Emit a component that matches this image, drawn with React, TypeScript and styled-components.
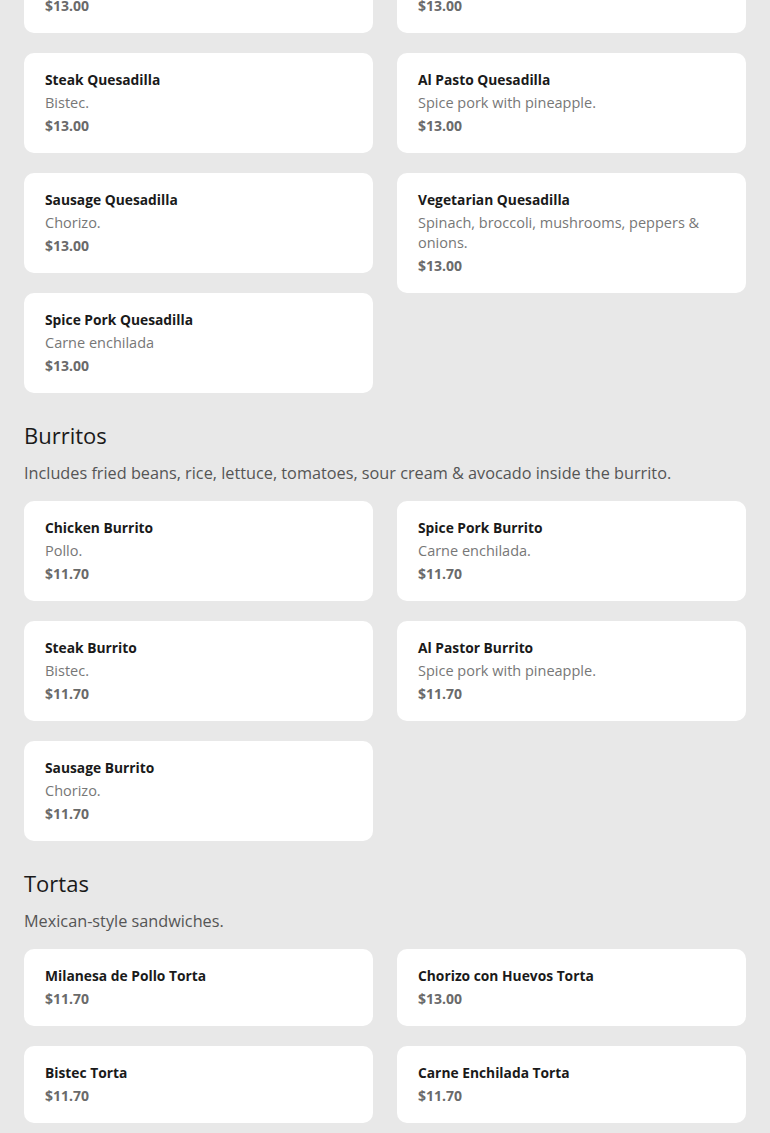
import type React from "react";
import styled, { createGlobalStyle } from "styled-components";

const GlobalStyle = createGlobalStyle`
  body {
    margin: 0;
    background: #e8e8e8;
    font-family: "Open Sans", "Noto Sans", sans-serif;
  }
`;

const Page = styled.div`
  padding: 0 24px 24px;
  margin-top: -67px;
`;

const Section = styled.section`
  margin-bottom: 27px;
`;

const SectionTitle = styled.h2`
  margin: 0;
  font-size: 22px;
  line-height: 30px;
  font-weight: 400;
  color: #1a1a1a;
`;

const SectionDesc = styled.p`
  margin: 11px 0 16px;
  font-size: 16.25px;
  line-height: 24px;
  color: #555;
`;

const Columns = styled.div`
  display: grid;
  grid-template-columns: 1fr 1fr;
  column-gap: 24px;
  align-items: start;
`;

const Column = styled.div`
  display: flex;
  flex-direction: column;
  gap: 20px;
`;

const Card = styled.div`
  background: #fff;
  border-radius: 10px;
  padding: 17px 21px 17px;
`;

const ItemName = styled.div`
  font-size: 13.8px;
  line-height: 20px;
  font-weight: 700;
  color: #1a1a1a;
`;

const ItemDesc = styled.div`
  margin: 3px 0 1px;
  font-size: 14.5px;
  line-height: 20px;
  color: #777;
`;

const ItemPrice = styled.div`
  margin-top: 3px;
  font-size: 14px;
  line-height: 20px;
  font-weight: 700;
  color: #6a6a6a;
`;

interface Item {
  name: string;
  desc?: string;
  price: string;
}

interface MenuSection {
  title?: string;
  desc?: string;
  left: Item[];
  right: Item[];
}

const sections: MenuSection[] = [
  {
    left: [
      { name: "Chicken Quesadilla", desc: "Pollo.", price: "$13.00" },
      { name: "Steak Quesadilla", desc: "Bistec.", price: "$13.00" },
      { name: "Sausage Quesadilla", desc: "Chorizo.", price: "$13.00" },
      { name: "Spice Pork Quesadilla", desc: "Carne enchilada", price: "$13.00" },
    ],
    right: [
      { name: "Shrimp Quesadilla", desc: "Camarones.", price: "$13.00" },
      { name: "Al Pasto Quesadilla", desc: "Spice pork with pineapple.", price: "$13.00" },
      {
        name: "Vegetarian Quesadilla",
        desc: "Spinach, broccoli, mushrooms, peppers & onions.",
        price: "$13.00",
      },
    ],
  },
  {
    title: "Burritos",
    desc: "Includes fried beans, rice, lettuce, tomatoes, sour cream & avocado inside the burrito.",
    left: [
      { name: "Chicken Burrito", desc: "Pollo.", price: "$11.70" },
      { name: "Steak Burrito", desc: "Bistec.", price: "$11.70" },
      { name: "Sausage Burrito", desc: "Chorizo.", price: "$11.70" },
    ],
    right: [
      { name: "Spice Pork Burrito", desc: "Carne enchilada.", price: "$11.70" },
      { name: "Al Pastor Burrito", desc: "Spice pork with pineapple.", price: "$11.70" },
    ],
  },
  {
    title: "Tortas",
    desc: "Mexican-style sandwiches.",
    left: [
      { name: "Milanesa de Pollo Torta", price: "$11.70" },
      { name: "Bistec Torta", price: "$11.70" },
    ],
    right: [
      { name: "Chorizo con Huevos Torta", price: "$13.00" },
      { name: "Carne Enchilada Torta", price: "$11.70" },
    ],
  },
];

const MenuCard: React.FC<{ item: Item }> = ({ item }) => (
  <Card>
    <ItemName>{item.name}</ItemName>
    {item.desc && <ItemDesc>{item.desc}</ItemDesc>}
    <ItemPrice>{item.price}</ItemPrice>
  </Card>
);

const App: React.FC = () => {
  return (
    <>
      <GlobalStyle />
      <Page>
        {sections.map((section, i) => (
          <Section key={section.title ?? i}>
            {section.title && <SectionTitle>{section.title}</SectionTitle>}
            {section.desc && <SectionDesc>{section.desc}</SectionDesc>}
            <Columns>
              <Column>
                {section.left.map((item) => (
                  <MenuCard key={item.name} item={item} />
                ))}
              </Column>
              <Column>
                {section.right.map((item) => (
                  <MenuCard key={item.name} item={item} />
                ))}
              </Column>
            </Columns>
          </Section>
        ))}
      </Page>
    </>
  );
};

export default App;
